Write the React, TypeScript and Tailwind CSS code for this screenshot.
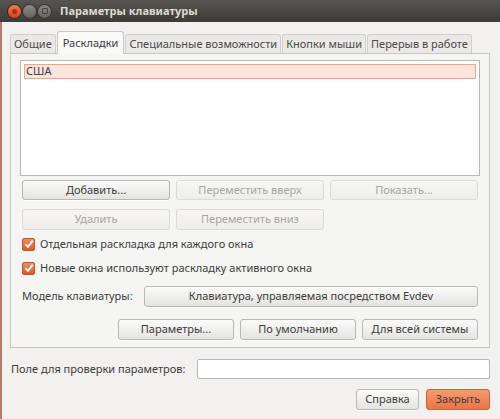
import React from 'react';

const font = { fontFamily: '"Noto Sans", "DejaVu Sans", sans-serif' };

function Btn({
  label,
  disabled = false,
  className = '',
}: {
  label: string;
  disabled?: boolean;
  className?: string;
}) {
  return (
    <div
      className={`flex items-center justify-center whitespace-nowrap rounded-[3px] border bg-gradient-to-b text-[11px] ${
        disabled
          ? 'border-[#dcdad6] from-[#f7f6f5] to-[#eeedeb] text-[#a8a6a2]'
          : 'border-[#b9b7b3] from-[#fbfbfa] to-[#e4e3e0] text-[#3c3c3c] shadow-[0_1px_0_rgba(255,255,255,0.8)]'
      } ${className}`}
    >
      {label}
    </div>
  );
}

function Check({ label }: { label: string }) {
  return (
    <div className="flex h-[16px] items-center gap-[5px]">
      <div className="flex h-[13px] w-[13px] items-center justify-center rounded-[2px] border border-[#c2552c] bg-gradient-to-b from-[#f58a5c] to-[#dd5a2a]">
        <svg width="10" height="10" viewBox="0 0 10 10">
          <path d="M1.5 5.2 L4 7.8 L8.8 1.6" fill="none" stroke="#ffffff" strokeWidth="1.9" />
        </svg>
      </div>
      <span className="whitespace-nowrap text-[11px] text-[#3c3c3c]">{label}</span>
    </div>
  );
}

function Tab({ label, active = false }: { label: string; active?: boolean }) {
  if (active) {
    return (
      <div className="relative z-10 -mb-px flex h-[23px] items-center whitespace-nowrap rounded-t-[3px] border border-b-0 border-[#c9c7c3] bg-[#f9f9f8] px-[5px] text-[11px] text-[#3c3c3c]">
        {label}
      </div>
    );
  }
  return (
    <div className="flex h-[19px] items-center whitespace-nowrap rounded-t-[3px] border border-b-0 border-[#d2d0cc] bg-[#eae9e7] px-[3px] text-[11px] text-[#4a4a4a]">
      {label}
    </div>
  );
}

export default function App() {
  return (
    <div className="flex h-[419px] w-[500px] flex-col overflow-hidden bg-[#f2f1f0]" style={font}>
      {/* Title bar */}
      <div className="flex h-[22px] shrink-0 items-center bg-gradient-to-b from-[#56554f] to-[#3c3b37] pl-[8px]">
        <div className="flex items-center gap-[2px]">
          <div className="flex h-[13px] w-[13px] items-center justify-center rounded-full bg-gradient-to-b from-[#f37a4c] to-[#d1431a] shadow-[0_0_0_1px_#3a2a22]">
            <div className="h-[5px] w-[5px] rounded-full bg-[#a8321a]" />
          </div>
          <div className="h-[13px] w-[13px] rounded-full bg-gradient-to-b from-[#8c8a85] to-[#65635e] shadow-[0_0_0_1px_#36352f]" />
          <div className="flex h-[13px] w-[13px] items-center justify-center rounded-full bg-gradient-to-b from-[#8c8a85] to-[#65635e] shadow-[0_0_0_1px_#36352f]">
            <div className="h-[6px] w-[6px] rounded-[1px] border border-[#44433e]" />
          </div>
        </div>
        <span className="ml-[9px] whitespace-nowrap text-[11px] font-bold text-[#dfdbd2]">Параметры клавиатуры</span>
      </div>

      <div className="flex flex-1 border-l-[2px] border-[#b77a68]">
        <div className="flex flex-1 flex-col pl-[8px] pr-[10px] pt-[9px]">
          {/* Tabs */}
          <div className="flex items-end gap-[1px]">
            <Tab label="Общие" />
            <Tab label="Раскладки" active />
            <Tab label="Специальные возможности" />
            <Tab label="Кнопки мыши" />
            <Tab label="Перерыв в работе" />
          </div>

          {/* Panel */}
          <div className="flex h-[295px] flex-col border border-[#c9c7c3] bg-[#f5f5f4] px-[9px] pt-[6px]">
            <div className="h-[116px] border border-[#b9b7b3] bg-white p-[3px]">
              <div className="flex h-[15px] items-center border border-[#e6a891] bg-[#fbe4dc] px-[1px] text-[11px] text-[#3c3c3c]">
                США
              </div>
            </div>

            <div className="mt-[4px] grid grid-cols-3 gap-x-[6px] gap-y-[9px] px-[2px]">
              <Btn label="Добавить..." className="h-[20px]" />
              <Btn label="Переместить вверх" disabled className="h-[20px]" />
              <Btn label="Показать..." disabled className="h-[20px]" />
              <Btn label="Удалить" disabled className="h-[21px]" />
              <Btn label="Переместить вниз" disabled className="h-[21px]" />
            </div>

            <div className="mt-[6px] flex flex-col gap-[8px] px-[2px]">
              <Check label="Отдельная раскладка для каждого окна" />
              <Check label="Новые окна используют раскладку активного окна" />
            </div>

            <div className="mt-[10px] flex items-center px-[2px]">
              <span className="whitespace-nowrap text-[11px] text-[#3c3c3c]">Модель клавиатуры:</span>
              <Btn label="Клавиатура, управляемая посредством Evdev" className="ml-auto h-[21px] w-[334px]" />
            </div>

            <div className="mt-[12px] flex justify-end gap-[6px] px-[2px]">
              <Btn label="Параметры..." className="h-[21px] w-[116px]" />
              <Btn label="По умолчанию" className="h-[21px] w-[116px]" />
              <Btn label="Для всей системы" className="h-[21px] w-[116px]" />
            </div>
          </div>

          {/* Test field */}
          <div className="mt-[11px] flex items-center pl-[1px]">
            <span className="whitespace-nowrap text-[11px] text-[#3c3c3c]">Поле для проверки параметров:</span>
            <div className="ml-auto h-[20px] w-[293px] rounded-[2px] border border-[#b9b7b3] bg-white" />
          </div>

          {/* Dialog buttons */}
          <div className="mt-[10px] flex justify-end gap-[7px]">
            <Btn label="Справка" className="h-[21px] w-[63px]" />
            <div className="flex h-[21px] w-[64px] items-center justify-center rounded-[3px] border border-[#c8633a] bg-gradient-to-b from-[#f59a72] to-[#ea7445] text-[11px] text-[#3c3c3c]">
              Закрыть
            </div>
          </div>
        </div>
      </div>
    </div>
  );
}
